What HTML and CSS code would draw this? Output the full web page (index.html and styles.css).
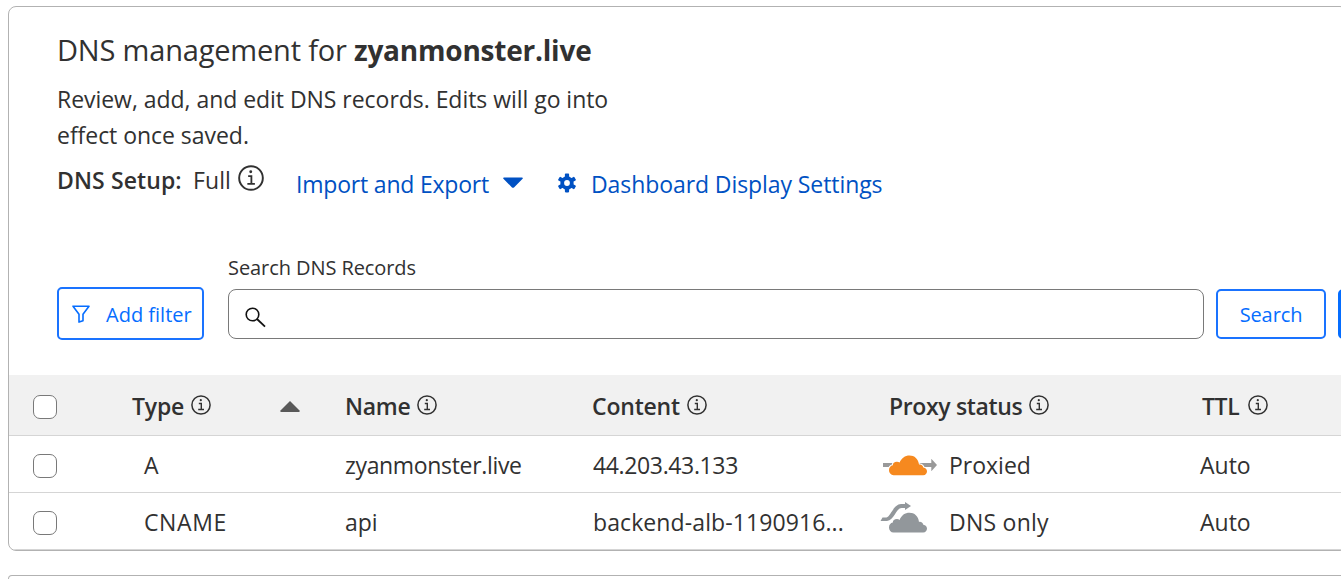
FILE: index.html
```html
<!DOCTYPE html>
<html lang="en">
<head>
<meta charset="utf-8">
<title>DNS management</title>
<link rel="stylesheet" href="styles.css">
</head>
<body>
<svg class="defs" width="0" height="0">
  <symbol id="info" viewBox="0 0 20 20">
    <circle cx="10" cy="10" r="9.1" fill="none" stroke="currentColor" stroke-width="1.5"/>
    <circle cx="9.8" cy="5.2" r="1.1" fill="currentColor"/>
    <path d="M7.8 8.500h2.500v6M7.200 14.500h5.800" fill="none" stroke="currentColor" stroke-width="1.4"/>
  </symbol>
  <path id="cloud" d="M4.500 20A4.800 4.800 0 0 1 0 15c0-2.800 1.500-4.500 3.800-5C3.700 7.800 5.700 6.500 8 6.600c1.100 0 1.900.3 2.600.8C12.300 2.800 16 .2 20.500.2c5 0 8.800 3.300 9.500 9.200 1.200-.2 2.300 0 3.200.8.7.5 1 1.200 1.100 2 2.300.3 3.700 1.800 3.700 3.800 0 2-1.500 4-3.800 4z"/>
</svg>

<main class="panel">
  <header class="intro">
    <h1 class="title">DNS management for <strong class="domain">zyanmonster.live</strong></h1>
    <p class="description">Review, add, and edit DNS records. Edits will go into effect once saved.</p>
    <div class="setup">
      <span class="setup-label">DNS Setup:</span>
      <span class="setup-value">Full</span>
      <svg class="setup-info"><use href="#info"/></svg>
      <a class="link import">Import and Export</a>
      <svg class="caret" viewBox="0 0 20 11"><path d="M1 .5h18c.8 0 1.100.7.6 1.200l-8.600 8.700c-.6.6-1.400.6-2 0L.4 1.700C-.1 1.200.2.5 1 .5z" fill="#0051c3"/></svg>
      <svg class="gear" viewBox="-10 -10 20 20">
        <g fill="#0051c3">
          <circle r="6.700"/>
          <rect x="-2.100" y="-9.400" width="4.200" height="18.800" rx=".8"/>
          <rect x="-2.100" y="-9.400" width="4.200" height="18.800" rx=".8" transform="rotate(60)"/>
          <rect x="-2.100" y="-9.400" width="4.200" height="18.800" rx=".8" transform="rotate(120)"/>
        </g>
        <circle r="2.900" fill="#fff"/>
      </svg>
      <a class="link display">Dashboard Display Settings</a>
    </div>
  </header>

  <section class="toolbar">
    <button class="button filter">
      <svg class="funnel" viewBox="0 0 18 18"><path d="M1 1.200h16l-6 8v6.500l-4 1.400V9.200z" fill="none" stroke="currentColor" stroke-width="1.600" stroke-linejoin="round"/></svg>
      <span>Add filter</span>
    </button>
    <div class="search-field">
      <label class="search-label">Search DNS Records</label>
      <div class="search-box">
        <svg class="magnifier" viewBox="0 0 21 21"><circle cx="7.500" cy="7.500" r="6.300" fill="none" stroke="#111" stroke-width="1.600"/><path d="M12 12l8 7.700" stroke="#111" stroke-width="1.800"/></svg>
      </div>
    </div>
    <button class="button search">Search</button>
    <button class="button add"></button>
  </section>

  <section class="table">
    <div class="row head">
      <span class="checkbox"></span>
      <div class="cell">Type<svg class="info"><use href="#info"/></svg><svg class="sort" viewBox="0 0 20 11"><path d="M10 0l9.500 9.400q.8 1.600-.8 1.600H1.300Q-.3 11 .5 9.400z" fill="#595959"/></svg></div>
      <div class="cell c-name">Name<svg class="info"><use href="#info"/></svg></div>
      <div class="cell c-content">Content<svg class="info"><use href="#info"/></svg></div>
      <div class="cell c-proxy">Proxy status<svg class="info"><use href="#info"/></svg></div>
      <div class="cell c-ttl">TTL<svg class="info"><use href="#info"/></svg></div>
    </div>
    <div class="row">
      <span class="checkbox"></span>
      <div class="cell type">A</div>
      <div class="cell domain-name">zyanmonster.live</div>
      <div class="cell address">44.203.43.133</div>
      <div class="cell proxy">
        <svg class="status" viewBox="0 0 60 36">
          <path d="M5 15h48.300v-4.200l5.700 6.200-5.700 6.200V19H5z" fill="#999"/>
          <use href="#cloud" x="11" y="7.200" fill="#f6891f" stroke="#fff" stroke-width="2" paint-order="stroke"/>
        </svg>
        <span>Proxied</span>
      </div>
      <div class="cell">Auto</div>
    </div>
    <div class="row">
      <span class="checkbox"></span>
      <div class="cell type cname">CNAME</div>
      <div class="cell">api</div>
      <div class="cell backend">backend-alb-1190916...</div>
      <div class="cell proxy">
        <svg class="status" viewBox="0 0 60 36">
          <path d="M2.500 16L4.500 12.600h4C13 11 15.500-.8 23-1h4v-2l6 4-6 4V3h-3.500C18 3.200 16 15.500 9 16z" class="bypass"/>
          <use href="#cloud" x="11" y="7.500" fill="#92979b"/>
        </svg>
        <span class="dns-only">DNS only</span>
      </div>
      <div class="cell">Auto</div>
    </div>
  </section>
</main>
<section class="panel next"></section>
</body>
</html>
```
FILE: styles.css
```css
* { box-sizing: border-box; }

body {
  margin: 0;
  padding: 6px 0 0 8px;
  height: 579px;
  overflow: hidden;
  background: #fff;
  color: #313131;
  font: 23px/36px "Open Sans", "Noto Sans", sans-serif;
}

svg { display: block; flex: none; overflow: visible; }
.defs { position: absolute; }

.panel {
  width: 1340px;
  height: 545px;
  border: 1px solid #b2b2b2;
  border-radius: 8px;
  overflow: hidden;
}
.next { margin-top: 24px; height: 4px; border-bottom: 0; border-radius: 8px 8px 0 0; }

.intro { height: 238px; padding: 25px 0 0 48px; }
.title { margin: 0; font-size: 29px; font-weight: 400; letter-spacing: -0.19px; white-space: nowrap; }
.domain { font-size: 28px; font-weight: 700; letter-spacing: -0.22px; }
.description { width: 570px; margin: 13px 0 0; letter-spacing: -0.04px; }

.setup { display: flex; align-items: flex-start; padding-top: 9px; white-space: nowrap; }
.setup-label { width: 136px; font-weight: 600; letter-spacing: 0.1px; }
.setup-value { width: 45px; letter-spacing: 0.1px; }
.setup-info { width: 26px; height: 26px; margin-top: 3px; }
.link { margin-top: 4px; color: #0051c3; }
.import { width: 194px; margin-left: 32px; letter-spacing: -0.2px; }
.caret { width: 20px; height: 11px; margin: 15px 0 0 13px; }
.gear { width: 20px; height: 20px; margin: 11px 0 0 34px; }
.display { margin-left: 14px; letter-spacing: -0.08px; }

.toolbar { display: flex; align-items: flex-end; height: 95px; padding-left: 48px; font-size: 20px; }
.button {
  display: flex;
  flex: none;
  align-items: center;
  justify-content: center;
  height: 50px;
  margin: 0 0 1px;
  padding: 2px 0 0;
  border: 2px solid #1a73ff;
  border-radius: 5px;
  background: #fff;
  color: #056dff;
  font: inherit;
}
.filter { width: 147px; height: 53px; margin-bottom: 0; justify-content: flex-start; padding: 2px 0 0 13px; gap: 16px; }
.funnel { width: 18px; height: 18px; margin-bottom: 2px; }
.search-field { flex: none; width: 976px; margin: 0 12px 1px 24px; }
.search-label { display: block; height: 39px; margin-top: 1px; letter-spacing: -0.08px; }
.search-box { display: flex; height: 50px; padding: 17px 0 0 16px; border: 1px solid #797979; border-radius: 8px; }
.magnifier { width: 21px; height: 21px; }
.search { width: 110px; margin-right: 12px; letter-spacing: -0.1px; }
.add { width: 60px; background: #056dff; border-color: #056dff; }

.table { margin-top: 35px; }
.row {
  display: grid;
  grid-template-columns: 123px 213px 248px 290px 317px 1fr;
  align-items: center;
  height: 57px;
  padding-top: 3px;
  border-bottom: 1px solid #d5d5d5;
}
.head { height: 61px; background: #f1f1f1; font-weight: 600; letter-spacing: -0.2px; }
.checkbox { width: 24px; height: 24px; margin-left: 24px; border: 1px solid #797979; border-radius: 7px; background: #fff; }
.cell { display: flex; align-items: center; padding-bottom: 2px; white-space: nowrap; }
.info { width: 20px; height: 20px; margin: 0 0 1px 7px; }
.sort { width: 20px; height: 11px; margin: 2px 0 0 69px; }
.c-name { margin-left: 0; letter-spacing: -0.3px; }
.c-content { margin-left: -1px; }
.c-proxy { margin-left: 6px; letter-spacing: -0.35px; }
.c-ttl { letter-spacing: -0.4px; margin-left: 2px; }
.c-ttl .info { margin-left: 9px; }
.type { padding-left: 12px; }
.cname { letter-spacing: 0.6px; }
.domain-name { letter-spacing: -0.33px; }
.address { letter-spacing: -0.36px; }
.backend { letter-spacing: 0.1px; }
.proxy { margin-left: -5px; }
.status { width: 60px; height: 36px; margin: 2px 11px 0 0; }
.bypass { fill: #92979b; }
.dns-only { letter-spacing: 0.25px; }
```
